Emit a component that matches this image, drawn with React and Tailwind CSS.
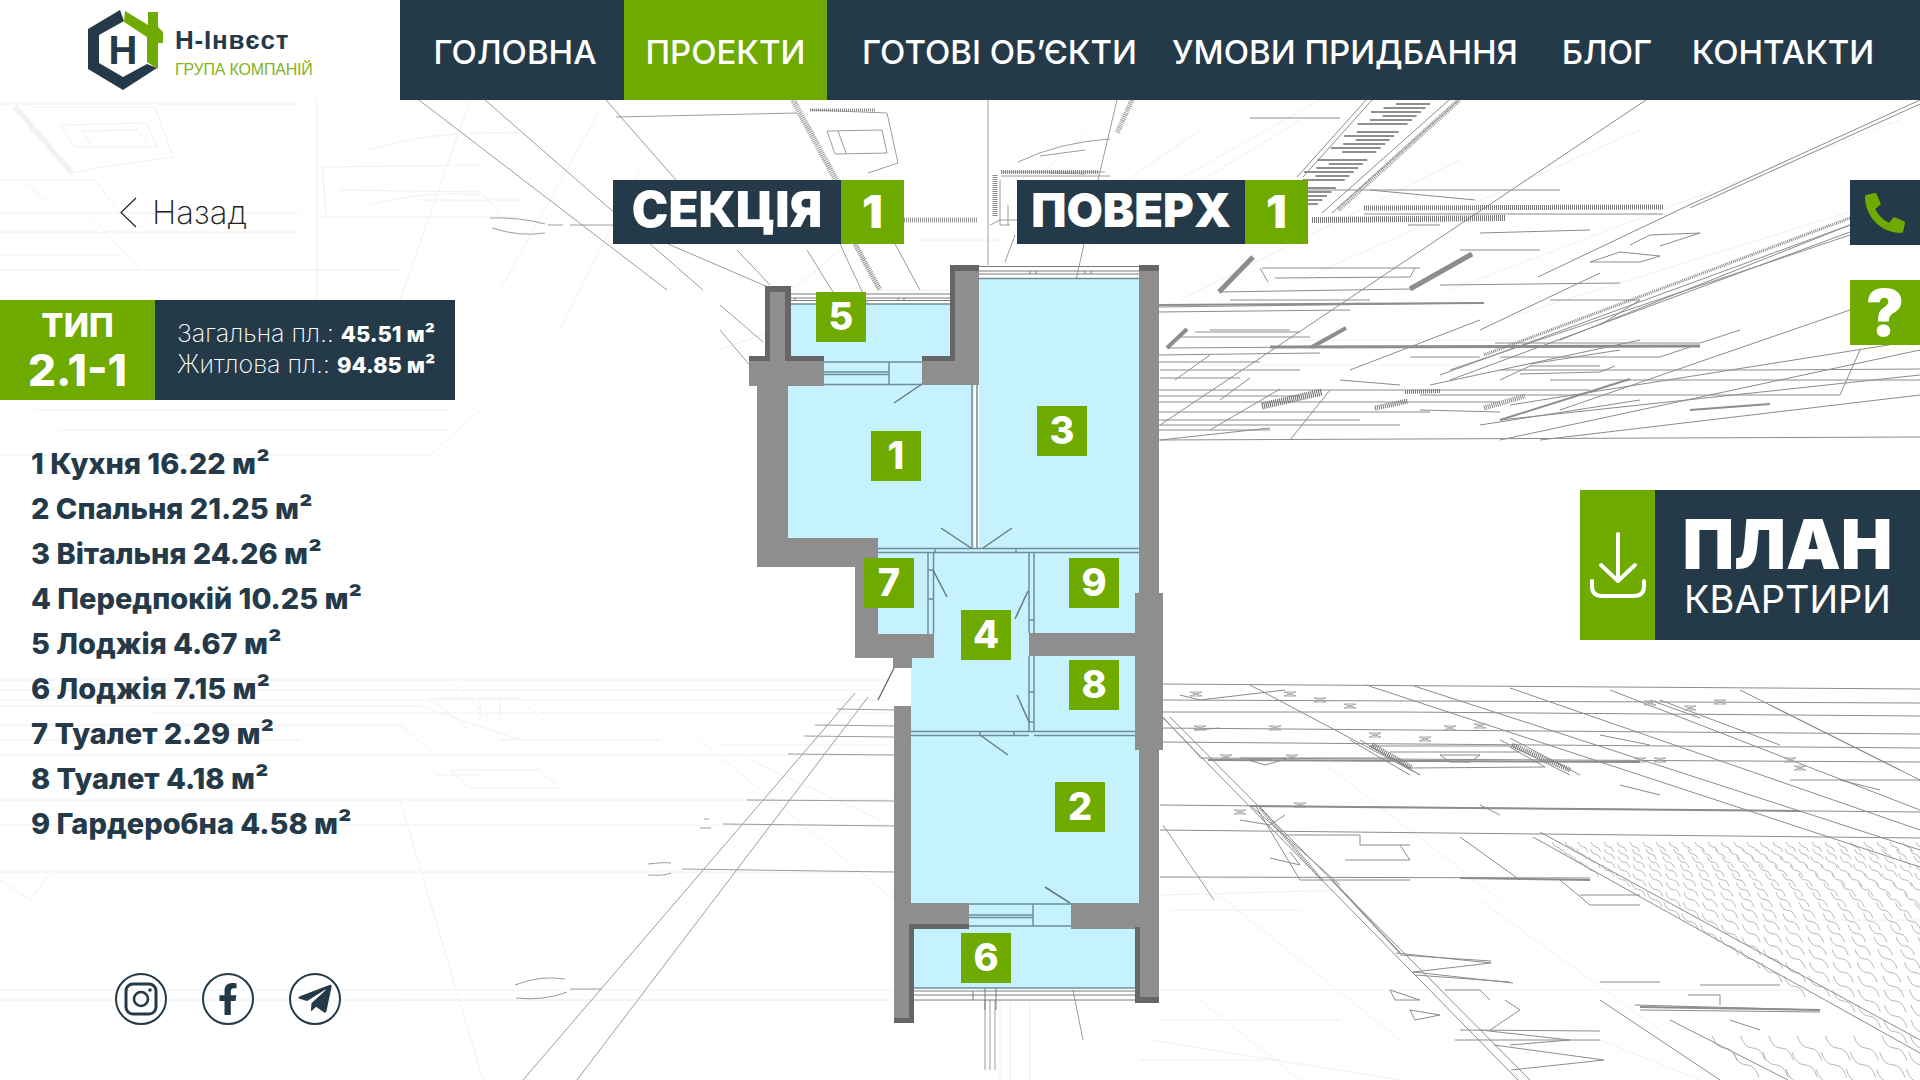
import { FaPhoneAlt, FaFacebookF, FaTelegramPlane } from 'react-icons/fa';

const navItems = [
  { label: 'ГОЛОВНА', width: 'w-[218px]' },
  { label: 'ПРОЕКТИ', width: 'w-[203px]', active: true },
  { label: 'ГОТОВІ ОБ’ЄКТИ', width: 'w-[345px]' },
  { label: 'УМОВИ ПРИДБАННЯ', width: 'w-[346px]' },
  { label: 'БЛОГ', width: 'w-[178px]' },
  { label: 'КОНТАКТИ', width: 'w-[174px]' },
];

const rooms = [
  '1 Кухня 16.22 м²',
  '2 Спальня 21.25 м²',
  '3 Вітальня 24.26 м²',
  '4 Передпокій 10.25 м²',
  '5 Лоджія 4.67 м²',
  '6 Лоджія 7.15 м²',
  '7 Туалет 2.29 м²',
  '8 Туалет 4.18 м²',
  '9 Гардеробна 4.58 м²',
];

// номери кімнат на плані, координати від кута блоку плану
const badges = [
  { n: 5, cls: 'left-[71px] top-[30px]' },
  { n: 1, cls: 'left-[126px] top-[169px]' },
  { n: 3, cls: 'left-[292px] top-[144px]' },
  { n: 7, cls: 'left-[119px] top-[296px]' },
  { n: 9, cls: 'left-[324px] top-[296px]' },
  { n: 4, cls: 'left-[216px] top-[348px]' },
  { n: 8, cls: 'left-[324px] top-[398px]' },
  { n: 2, cls: 'left-[310px] top-[520px]' },
  { n: 6, cls: 'left-[216px] top-[671px]' },
];

// дрібні штрихи на підлозі справа внизу
const squiggles = () => {
  let d = '';
  let y = 842;
  for (let j = 0; j < 24; j++) {
    const step = 13 + j * 0.9;
    for (let i = 0; i < 50; i++) {
      const x = 1500 + i * step + (j % 2) * step * 0.5;
      if (x > 1930) break;
      const inFirst = x > 1535 + (y - 837) * 1.79;
      const inSecond = y > 1022 && x > 1672 + (y - 1020) * 1.9;
      if (!inFirst && !inSecond) continue;
      const s = 6 + j * 0.55;
      d += `M${x.toFixed(1)} ${y.toFixed(1)}q${(s * 0.25).toFixed(1)} ${(s * 0.8).toFixed(1)} ${(s * 0.8).toFixed(1)} ${(s * 0.8).toFixed(1)}t${(s * 0.8).toFixed(1)} ${(s * 0.8).toFixed(1)}`;
    }
    y += 7 + j * 0.55;
  }
  return d;
};

// короткі смужки вздовж діагоналі над кресленням
const ladderBars = () => {
  let d = '';
  for (let k = 0; k < 26; k++) {
    if (k % 7 === 6) continue;
    const y = 104 + k * 4;
    const x = 1430 - (y - 104) * 1.12;
    const w = 34 + (k % 3) * 8;
    d += `M${x - w} ${y}h${w}`;
  }
  return d;
};

// "метелики" на горизонталях внизу справа
const bowties = () => {
  const marks = [
    [1196, 694], [1290, 694], [1320, 700], [1200, 728], [1275, 728], [1350, 706], [1226, 757], [1292, 757], [1375, 735],
    [1425, 739], [1450, 728], [1480, 726], [1650, 703], [1690, 708], [1720, 702], [1640, 760], [1660, 760], [1790, 760], [1800, 768],
    [1300, 805], [1240, 812],
  ];
  return marks.map(([x, y]) => `M${x - 6} ${y - 2}h12l-12 4h12z`).join('');
};

const faintLines = `M0 104H300M15 107L72 173M32 107H155L173 157L103 167L72 173M60 125L147 123L157 147L75 147ZM82 131L137 130L150 146L92 146Z
M317 100V300M0 213H300M322 167L480 165M322 217H520M340 190L480 192L500 213M322 167L326 213M0 180H95L120 213M20 178L45 200M90 215L140 270
M0 232H300M370 150Q430 130 520 133M370 205Q420 190 480 195M470 100L400 300M0 270H400M0 255H120M320 300L345 385M35 410H450M60 430H450M0 455H430L480 410
M600 110L500 290M640 170L560 330M420 200H520M840 250L780 300M920 240H1000M880 290H1050M800 320L720 350M1000 210L1090 130M1040 240L1200 130M1090 250L1300 120
M1320 100L1160 190M1460 160L1180 300M1640 130L1300 280M1900 120L1450 290M1920 190L1500 320M1300 340H1700M1200 365H1600
M0 680H890M0 690H890M0 700H890M450 680L490 720M430 698L470 730M430 698H520L545 723M480 698V720M500 698V720M0 706H420L520 740M150 713H890M0 725H400L430 750M0 740H300M0 755H890
M500 740H660M720 745H890M700 740L900 905M750 760L880 820M450 770H540L560 788H470ZM436 775H480M0 800H890M0 825H890M0 872H890M0 990H900M400 800L483 1080M0 880L30 900L50 873
M0 1000H890M400 1000H890M1030 1000V1080M1010 1000V1080M1000 1000V1080M1150 990H1920M1150 1040L1400 1080M1160 1020H1340M1140 1060H1280M1320 760L1500 900M1200 880L1400 1040M1700 920H1920M1480 900L1660 1030
M1160 895L1350 890M1170 910H1300M1200 1000L1300 1080M1600 1040L1700 1080`;

const midLines = `M419 100L667 290M485 100L703 290M606 100L676 180M668 244L768 287M720 305L763 342M720 330L752 368M737 250L770 285M807 250L833 292M616 117L797 113
M810 110L887 113L898 163L868 173M827 131L882 130L887 153L835 154ZM838 131L846 153M1018 162Q1060 142 1110 139M1040 156L1085 150M1050 173L1085 174M988 100V265M1117 100L1098 180M1015 235L1005 262
M490 218Q520 217 545 224M492 228Q520 237 545 233M548 225H563M570 225H613M1000 180V225L1010 225M1008 205V225M1001 172H1105M1001 176H1110M1050 220H1000L990 225M1098 180L1075 285M895 244L920 290M840 244L880 330
M855 693L523 1080M868 697L577 1080M837 709L894 710M815 725L894 726M804 736L894 737M788 754L894 755M747 800L894 801M723 824L894 826M682 869L894 872M570 989H602M515 985Q540 975 565 979M516 998Q545 1001 567 992
M648 864Q665 862 671 863M648 875Q665 876 671 873M704 819H709M700 828H711M1073 990L1083 1040M985 1000V1070M990 1000V1070M995 1000V1070M1163 717L1200 757M1163 825L1214 900`;

const darkLines = `M1920 100L1685 207L1538 277M1920 104L1690 208M1646 100L1160 425M1850 225L1440 375M1850 232L1450 380M1364 214H1663M1459 100L1332 213M1449 100L1322 213M1366 100L1297 177M1372 100L1303 177
M1253 257L1219 292L1410 289L1472 254M1262 268H1420M1268 282L1260 268M1275 278L1410 277L1415 268M1187 329L1167 348L1312 347L1346 328M1180 337H1310M1195 332H1300
M1157 307L1484 303M1157 312L1350 310M1230 300H1370M1210 330H1290M1157 355L1320 353M1160 370H1300M1160 378H1240M1157 390H1590M1157 402H1500M1157 420H1360M1157 430H1270M1157 440L1920 437
M1560 190L1250 190M1340 118L1250 118M1370 190L1475 200M1480 233L1590 230M1408 225L1440 225M1440 285L1620 283M1460 250H1540M1550 300H1640L1600 325M1480 330L1600 273M1500 370L1760 370L1920 369
M1495 343H1700L1740 330M1550 380H1920M1560 410L1850 310M1500 440L1920 350M1500 420L1920 375M1540 440L1920 395M1510 405L1920 340M1450 370L1850 235M1560 340L1850 225M1420 395H1840L1860 350
M1530 364L1620 350M1480 425L1640 400M1270 428L1160 440M1430 385L1640 340M1590 262L1640 262L1660 256L1620 252ZM1660 246L1700 233L1650 235L1630 245M1280 389L1210 430M1350 370L1480 320M1330 390L1290 440
M1500 357H1660L1690 347M1520 374L1600 372L1615 366M1500 380L1530 366H1600M1410 357H1480M1157 362H1260M1157 396H1300M1157 412H1430M1157 425H1400M1175 380L1210 355M1220 400L1250 378M1340 380L1400 385M1420 410L1500 412
M1160 684L1920 689M1160 700L1920 703M1160 712H1400L1920 716M1160 728L1920 734M1160 742L1920 748M1200 758L1920 762M1160 805L1920 812M1160 830L1920 838M1160 877L1590 878M1162 717L1518 1080M1170 717L1530 1080
M1250 685L1420 775M1366 685L1920 867M1414 686L1920 850M1510 688L1920 830M1610 690L1920 810M1740 690L1920 780M1533 837L1920 1053M1540 832L1920 1040M1460 837L1520 880M1670 1020L1788 1080M1600 1000L1720 1080
M1369 746L1410 768L1545 767L1508 746ZM1390 752H1520M1440 755H1480L1470 762H1450ZM1350 740L1410 775M1360 740L1420 775M1500 740L1570 775M1510 738L1580 775M1240 758H1390M1248 760L1290 758L1265 765ZM1195 730L1220 728M1180 695L1200 700L1285 690
M1255 805L1300 880M1250 805L1340 885M1300 880H1410M1285 835H1360L1360 845H1410M1345 860H1410L1400 845M1240 820L1270 825L1285 815M1270 858L1300 865L1290 852M1560 880L1590 905H1625L1640 905M1580 895L1640 895
M1396 953L1491 963L1413 972L1513 983M1400 955L1491 961M1415 975L1510 982M1390 990L1420 1000L1395 1000ZM1445 990L1480 990L1490 1000M1410 1010L1440 1015L1415 1020ZM1490 1030L1520 1010L1505 1000M1460 1030L1600 1031
M1494 1045L1604 1060L1511 1070M1480 1030L1570 1040L1510 1045M1600 982H1660M1700 985H1780M1688 995H1720V1005M1635 1005L1820 1010M1640 1010L1820 1012M1730 1020L1760 1030M1455 1040H1600
M1650 700L1700 718M1660 700L1780 745M1770 705L1900 770M1790 780H1920M1600 735L1650 745M1480 805L1500 815M1620 785L1660 795M1840 780L1880 790`;

const PlanBackground = () => (
  <svg className="absolute inset-0 pointer-events-none" width="1920" height="1080" viewBox="0 0 1920 1080" fill="none">
    <path d={faintLines} stroke="#f0f0f0" strokeWidth="1" />
    <path d={squiggles()} stroke="#a4a4a4" strokeWidth="0.8" />
    <path d={midLines} stroke="#9c9c9c" strokeWidth="1" />
    <path d={darkLines} stroke="#8c8c8c" strokeWidth="1" />
    <path d={ladderBars()} stroke="#8f8f8f" strokeWidth="2" />
    <path d={bowties()} stroke="#a8a8a8" strokeWidth="1" />
    {/* заштриховані смуги */}
    <g strokeDasharray="1 1">
      <line x1="15" y1="107" x2="72" y2="173" stroke="#e8e8e8" strokeWidth="6" />
      <line x1="793" y1="100" x2="836" y2="180" stroke="#999" strokeWidth="6" />
      <line x1="855" y1="244" x2="880" y2="290" stroke="#888" strokeWidth="5" />
      <line x1="1001" y1="172" x2="1098" y2="172" stroke="#888" strokeWidth="4" />
      <line x1="995" y1="175" x2="995" y2="217" stroke="#888" strokeWidth="5" />
      <line x1="904" y1="220" x2="977" y2="220" stroke="#999" strokeWidth="5" />
      <line x1="810" y1="110" x2="875" y2="110" stroke="#888" strokeWidth="3" />
      <line x1="1132" y1="100" x2="1117" y2="133" stroke="#999" strokeWidth="5" />
      <line x1="1364" y1="208" x2="1663" y2="207" stroke="#777" strokeWidth="5" />
      <line x1="1312" y1="220" x2="1506" y2="218" stroke="#777" strokeWidth="6" />
      <line x1="1459" y1="100" x2="1338" y2="210" stroke="#999" strokeWidth="5" />
      <line x1="1850" y1="218" x2="1484" y2="355" stroke="#888" strokeWidth="3" />
      <line x1="1262" y1="406" x2="1322" y2="392" stroke="#666" strokeWidth="7" />
      <line x1="1375" y1="408" x2="1408" y2="401" stroke="#777" strokeWidth="5" />
      <line x1="1405" y1="392" x2="1440" y2="391" stroke="#777" strokeWidth="4" />
      <line x1="1484" y1="408" x2="1525" y2="396" stroke="#888" strokeWidth="5" />
      <line x1="1372" y1="745" x2="1412" y2="768" stroke="#777" strokeWidth="5" />
      <line x1="1512" y1="745" x2="1570" y2="770" stroke="#777" strokeWidth="5" />
      <line x1="1260" y1="808" x2="1322" y2="880" stroke="#888" strokeWidth="3" />
    </g>
    <g stroke="#8d8d8d">
      <line x1="1253" y1="257" x2="1219" y2="292" strokeWidth="5" />
      <line x1="1472" y1="254" x2="1410" y2="289" strokeWidth="5" />
      <line x1="1187" y1="329" x2="1167" y2="348" strokeWidth="4" />
      <line x1="1346" y1="328" x2="1312" y2="347" strokeWidth="4" />
      <line x1="1157" y1="305" x2="1484" y2="303" strokeWidth="2" />
      <line x1="1270" y1="347" x2="1700" y2="346" strokeWidth="3" />
      <line x1="1630" y1="379" x2="1500" y2="420" strokeWidth="2" />
      <line x1="1690" y1="410" x2="1770" y2="404" strokeWidth="2" />
      <line x1="1640" y1="1007" x2="1820" y2="1010" strokeWidth="2" />
      <line x1="1250" y1="806" x2="1800" y2="811" strokeWidth="2" />
      <line x1="1208" y1="760" x2="1640" y2="762" strokeWidth="2" />
      <line x1="1460" y1="878" x2="1590" y2="880" strokeWidth="2" />
      <line x1="1332" y1="880" x2="1400" y2="953" strokeWidth="1.5" />
    </g>
  </svg>
);

const FloorPlan = () => (
  <div className="relative w-[420px] h-[770px]">
    <svg width="420" height="770" viewBox="745 262 420 770" fill="none">
      {/* кімнати */}
      <g fill="#c6f1ff">
        <rect x="979" y="279" width="160" height="272" />
        <rect x="788" y="384" width="186" height="166" />
        <rect x="790" y="304" width="160" height="58" />
        <rect x="824" y="361" width="98" height="25" />
        <rect x="878" y="548" width="262" height="90" />
        <rect x="911" y="630" width="228" height="274" />
        <rect x="969" y="903" width="102" height="26" />
        <rect x="914" y="929" width="221" height="59" />
      </g>
      {/* стіни */}
      <g fill="#8e8e8e">
        <polygon points="765,286 791,286 791,356 824,356 824,386 788,386 788,538 878,538 878,634 934,634 934,658 912,658 912,668 893,668 893,658 855,658 855,567 757,567 757,386 749,386 749,356 765,356" />
        <polygon points="950,265 979,265 979,385 922,385 922,356 950,356" />
        <polygon points="1139,265 1159,265 1159,593 1163,593 1163,750 1159,750 1159,1003 1135,1003 1135,929 1071,929 1071,903 1139,903 1139,750 1135,750 1135,656 1029,656 1029,633 1135,633 1135,593 1139,593" />
        <polygon points="894,706 911,706 911,903 969,903 969,929 914,929 914,1023 894,1023" />
      </g>
      <g fill="#666666">
        <polygon points="950,265 979,265 979,271 955,271 955,361 922,361 922,356 950,356" />
        <rect x="1139" y="265" width="20" height="6" />
        <polygon points="765,286 791,286 791,356 824,356 824,361 785,361 785,292 770,292 770,361 749,361 749,356 765,356" />
        <polygon points="909,924 969,924 969,929 914,929 914,1023 894,1023 894,1018 909,1018" />
        <polygon points="1135,927 1140,927 1140,997 1159,997 1159,1003 1135,1003" />
      </g>
      {/* перегородки */}
      <g stroke="#6f8d97" strokeWidth="1.5">
        <path d="M972 385V548M977 385V548M979 278.5H1139" />
        <path d="M878 548.5H1139M878 552.5H1139M935 548.5V552.5M1016 548.5V552.5" />
        <path d="M928 553V634M933.5 553V634M928 570H933M928 599H933" />
        <path d="M1029 553V633M1034 553V633M1029 656V731M1034 656V731M1029 620H1034M1029 692H1034M1029 722H1034" />
        <path d="M911 731.5H1135M911 735.5H1029M1034 735.5H1135M980 731V735M1014 731V735" />
        <path d="M824 362H922M824 384.5H922M824 372H889M824 374.5H889M889 362V384" />
        <path d="M969 904H1071M969 926H1071M969 915H1033M969 917.5H1033M1033 904V926" />
        <path d="M791 304H950M914 988H1135" />
      </g>
      {/* вікна */}
      <g stroke="#7a7a7a" strokeWidth="1">
        <path d="M979 266.5H1139M979 271H1139M979 274H1139M1030 271V274M1036 271V274M1085 271V274M1091 271V274" />
        <path d="M791 294H950M791 298H950M791 300.5H950M795 298V300M898 298V300M904 298V300" />
        <path d="M914 991H1135M914 995H1135M914 1000H1135M973 991V1000M985 988V1010M996 988V1010" />
      </g>
      {/* двері */}
      <g stroke="#6a7a80" strokeWidth="1.5">
        <path d="M922 384L894 403M971 548L941 528M983 548L1012 528M933 570L947 597M1028 591L1015 619M1017 695L1029 722M980 735L1008 755M1070 903L1045 887M894 668L878 700" />
      </g>
    </svg>
    {badges.map((b) => (
      <div key={b.n} className={`absolute ${b.cls} w-[50px] h-[50px] pb-[3px] bg-[#6eaa00] flex items-center justify-center text-white text-[38px] font-extrabold leading-none`}>
        {b.n}
      </div>
    ))}
  </div>
);

const Logo = () => (
  <div className="w-[400px] h-[100px] bg-white flex items-start pl-[88px]">
    <svg className="mt-[10px]" width="76" height="80" viewBox="88 10 76 80">
      <polygon fill="#253a49" points="120,10 88,29 88,69 123,90 157,68 147,64 123,77 99,63 99,35 124,21" />
      <polygon fill="#6eaa00" points="125,11 148,25 148,12 158,12 158,27 163,32 163,43 158,43 158,69 147,62 147,37 124,22" />
      <text x="123" y="64" textAnchor="middle" fontFamily="Liberation Sans" fontWeight="700" fontSize="40" fill="#253a49">H</text>
    </svg>
    <div className="ml-[11px] mt-[25px]" style={{ fontFamily: '"Liberation Sans", sans-serif' }}>
      <div className="text-[26px] leading-[30px] font-bold text-[#253a49] tracking-[0.8px]">Н-Інвєст</div>
      <div className="mt-[5px] text-[16px] leading-[20px] text-[#7fb51c] tracking-[-0.2px]">ГРУПА КОМПАНІЙ</div>
    </div>
  </div>
);

const SocialCircle = ({ children }) => (
  <div className="w-[52px] h-[52px] rounded-full border-2 border-[#253a49] flex items-center justify-center text-[#253a49]">
    {children}
  </div>
);

const FloorLabel = ({ title, num, textCls }) => (
  <div className="flex h-[64px]">
    <div className={`w-[228px] pb-[6px] bg-[#253a49] text-white flex items-center justify-center font-black leading-none ${textCls}`}>
      {title}
    </div>
    <div className="w-[63px] pb-[3px] bg-[#6eaa00] text-white flex items-center justify-center text-[46px] font-black leading-none">
      {num}
    </div>
  </div>
);

export default function App() {
  return (
    <div className="relative w-[1920px] h-[1080px] overflow-hidden bg-white" style={{ fontFamily: 'Inter, "Liberation Sans", sans-serif' }}>
      <PlanBackground />

      <header className="relative flex h-[100px]">
        <Logo />
        <nav className="flex flex-1 bg-[#253a49] pl-[6px]">
          {navItems.map((item) => (
            <a
              key={item.label}
              className={`${item.width} pt-[6px] flex items-center justify-center text-white text-[33px] font-medium whitespace-nowrap ${item.active ? 'bg-[#6eaa00]' : ''}`}
            >
              {item.label}
            </a>
          ))}
        </nav>
      </header>

      <main className="relative flex h-[980px]">
        {/* ліва колонка */}
        <div className="w-[613px] flex flex-col">
          <div className="mt-[97px] ml-[120px] flex items-center h-[30px]">
            <svg width="17" height="31" viewBox="0 0 17 31" fill="none">
              <path d="M16 1L1 15.5L16 30" stroke="#222" strokeWidth="1.2" />
            </svg>
            <span className="ml-[15px] text-[33px] font-extralight text-[#222] leading-none">Назад</span>
          </div>

          <div className="mt-[73px] flex h-[100px] w-[455px]">
            <div className="w-[155px] bg-[#6eaa00] text-white flex flex-col items-center">
              <span className="mt-[5px] text-[33px] font-extrabold leading-[40px]">ТИП</span>
              <span className="text-[44px] font-extrabold leading-[50px]">2.1-1</span>
            </div>
            <div className="flex-1 bg-[#253a49] text-white pl-[22px] pt-[18px] text-[25px] leading-[30px] font-extralight whitespace-nowrap">
              <div>Загальна пл.: <b className="text-[22px] font-extrabold">45.51 м²</b></div>
              <div>Житлова пл.: <b className="text-[22px] font-extrabold">94.85 м²</b></div>
            </div>
          </div>

          <ul className="mt-[41px] ml-[31px] text-[29px] leading-[45px] font-extrabold text-[#253a49] whitespace-nowrap">
            {rooms.map((r) => (
              <li key={r}>{r}</li>
            ))}
          </ul>

          <div className="mt-[127px] ml-[115px] flex gap-[35px]">
            <SocialCircle>
              <svg width="36" height="36" viewBox="0 0 36 36" fill="none" stroke="#253a49">
                <rect x="3" y="3" width="30" height="30" rx="7" strokeWidth="3" />
                <circle cx="18" cy="18" r="7" strokeWidth="2.6" />
                <circle cx="27" cy="9" r="1.8" fill="#253a49" stroke="none" />
              </svg>
            </SocialCircle>
            <SocialCircle>
              <FaFacebookF size={32} />
            </SocialCircle>
            <SocialCircle>
              <FaTelegramPlane size={38} />
            </SocialCircle>
          </div>
        </div>

        {/* план */}
        <div className="w-[695px] flex flex-col">
          <div className="mt-[80px] flex justify-between">
            <FloorLabel title="СЕКЦІЯ" num="1" textCls="text-[49px]" />
            <FloorLabel title="ПОВЕРХ" num="1" textCls="text-[47px]" />
          </div>
          <div className="mt-[18px] ml-[132px]">
            <FloorPlan />
          </div>
        </div>

        {/* права колонка */}
        <div className="flex-1 flex flex-col items-end">
          <div className="mt-[80px] w-[70px] h-[65px] bg-[#253a49] flex items-center justify-center">
            <FaPhoneAlt size={40} color="#6eaa00" />
          </div>
          <div className="mt-[35px] w-[70px] h-[65px] bg-[#6eaa00] flex items-center justify-center text-white text-[64px] font-black leading-none">
            ?
          </div>
          <div className="mt-[145px] flex h-[150px] w-[340px]">
            <div className="w-[75px] bg-[#6eaa00] flex items-center justify-center">
              <svg width="56" height="66" viewBox="0 0 56 66" fill="none" stroke="white" strokeWidth="4" strokeLinecap="round" strokeLinejoin="round">
                <path d="M28 2V49M11 33L28 49L45 33" />
                <path d="M2 49V54Q2 64 12 64H44Q54 64 54 54V49" />
              </svg>
            </div>
            <div className="flex-1 bg-[#253a49] text-white flex flex-col items-center">
              <span className="mt-[21px] text-[69px] font-black leading-[66px]">ПЛАН</span>
              <span className="text-[38px] font-normal leading-[44px]">КВАРТИРИ</span>
            </div>
          </div>
        </div>
      </main>
    </div>
  );
}
